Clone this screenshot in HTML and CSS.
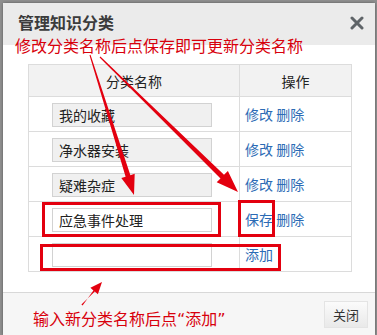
FILE: index.html
```html
<!DOCTYPE html>
<html lang="zh-CN">
<head>
    <meta charset="UTF-8">
    <title>管理知识分类</title>
    <link rel="stylesheet" href="styles.css">
</head>
<body>

<div class="dialog">
    <div class="dialog-head">
        <h3>管理知识分类</h3>
        <span class="close">
            <svg width="14" height="14" viewBox="0 0 14 14"><path d="M2 2 L12 12 M12 2 L2 12" stroke="#5f6468" stroke-width="3" stroke-linecap="round"/></svg>
        </span>
    </div>

    <div class="dialog-body">
        <table class="cat-table">
            <colgroup>
                <col class="c-name">
                <col class="c-op">
            </colgroup>
            <tr>
                <th>分类名称</th>
                <th>操作</th>
            </tr>
            <tr>
                <td class="col-name"><input type="text" value="我的收藏" disabled></td>
                <td class="col-op"><a href="#">修改</a> <a href="#">删除</a></td>
            </tr>
            <tr>
                <td class="col-name"><input type="text" value="净水器安装" disabled></td>
                <td class="col-op"><a href="#">修改</a> <a href="#">删除</a></td>
            </tr>
            <tr>
                <td class="col-name"><input type="text" value="疑难杂症" disabled></td>
                <td class="col-op"><a href="#">修改</a> <a href="#">删除</a></td>
            </tr>
            <tr>
                <td class="col-name"><input type="text" value="应急事件处理"></td>
                <td class="col-op"><a href="#">保存</a> <a href="#">删除</a></td>
            </tr>
            <tr>
                <td class="col-name"><input type="text" value=""></td>
                <td class="col-op"><a href="#">添加</a></td>
            </tr>
        </table>
    </div>

    <div class="dialog-foot">
        <button>关闭</button>
    </div>

    <!-- annotations drawn over the dialog -->
    <div class="note note-top">修改分类名称后点保存即可更新分类名称</div>
    <div class="note note-bottom">输入新分类名称后点<span class="q">“</span>添加<span class="q">”</span></div>
    <svg class="marks" width="377" height="335" viewBox="0 0 377 335">
        <g fill="#e3000f">
            <polygon points="89.5,55.2 90.5,54.8 130.4,175.2 134.7,173.8 134,195 121.3,178 125.6,176.7"/>
            <polygon points="99.6,57.4 100.4,56.6 224,174.8 227.9,170.9 238,192 216.7,182.3 220.5,178.4"/>
            <polygon points="82.6,305.6 93.4,290.4 90.4,287.8 102,282 97.9,294.3 94.8,291.6 81.4,304.4"/>
        </g>
        <g fill="none" stroke="#e3000f" stroke-width="3">
            <rect x="43.5" y="203.5" width="176" height="32"/>
            <rect x="239.5" y="201.5" width="34" height="34"/>
            <rect x="41.5" y="245.5" width="238" height="24"/>
        </g>
    </svg>
</div>

</body>
</html>
```

FILE: styles.css
```css
body {
    margin: 0;
    background: #8f8f8f;
    font-family: "Noto Sans CJK SC", "DejaVu Sans", sans-serif;
    font-size: 14px;
    color: #333;
    height: 335px;
    overflow: hidden;
}
.dialog {
    position: relative;
    margin: 3px 2px 0 3px;
    background: #fff;
    border-radius: 2px 2px 0 0;
    height: 332px;
    box-shadow: 0 0 3px rgba(0, 0, 0, 0.4);
}
.dialog-head {
    height: 42px;
    background: #ebebeb;
    display: flex;
    align-items: center;
    justify-content: space-between;
    padding: 0 11px 0 15px;
}
.dialog-head h3 {
    margin: 0 0 4px 0;
    font-size: 16px;
    font-weight: bold;
    color: #3c3c3c;
    line-height: 20px;
}
.close {
    display: flex;
    margin-bottom: 2px;
}
.dialog-body {
    padding: 19px 23px 20px 25px;
}
.cat-table {
    border-collapse: collapse;
    table-layout: fixed;
    width: 323px;
}
.c-name {
    width: 211px;
}
.c-op {
    width: 112px;
}
.cat-table th,
.cat-table td {
    border: 1px solid #dcdcdc;
    padding: 0;
}
.cat-table th {
    height: 31px;
    background: #f2f2f2;
    font-weight: normal;
    color: #222;
    text-align: center;
}
.cat-table td {
    height: 34px;
}
.cat-table td.col-name {
    padding-left: 23px;
}
.cat-table td.col-op {
    padding-left: 5px;
}
.cat-table input {
    box-sizing: border-box;
    width: 160px;
    height: 24px;
    margin: 1px 0 0 0;
    padding: 0 6px;
    border: 1px solid #d2d2d2;
    background: #fff;
    font-family: inherit;
    font-size: 14px;
    color: #222;
    display: block;
}
.cat-table input:disabled {
    background: #f0f0f0;
    color: #222;
}
.cat-table a {
    color: #2c6bb5;
    text-decoration: none;
}
.dialog-foot {
    border-top: 1px solid #d8d8d8;
    background: #f6f6f6;
    height: 40px;
    padding: 8px 7px 0 0;
    display: flex;
    justify-content: flex-end;
    align-items: flex-start;
}
.dialog-foot button {
    width: 44px;
    height: 27px;
    border: 1px solid #e4e4e4;
    background: linear-gradient(#fbfbfb, #e9e9e9);
    font-family: inherit;
    font-size: 13px;
    color: #333;
    padding: 0;
}
.note {
    position: absolute;
    color: #d8000c;
    font-size: 16px;
    line-height: 18px;
    white-space: nowrap;
}
.note .q {
    font-family: "DejaVu Sans", sans-serif;
}
.note-top {
    left: 12px;
    top: 33px;
}
.note-bottom {
    left: 30px;
    top: 306px;
}
.marks {
    position: absolute;
    left: -3px;
    top: -3px;
    pointer-events: none;
}
```
